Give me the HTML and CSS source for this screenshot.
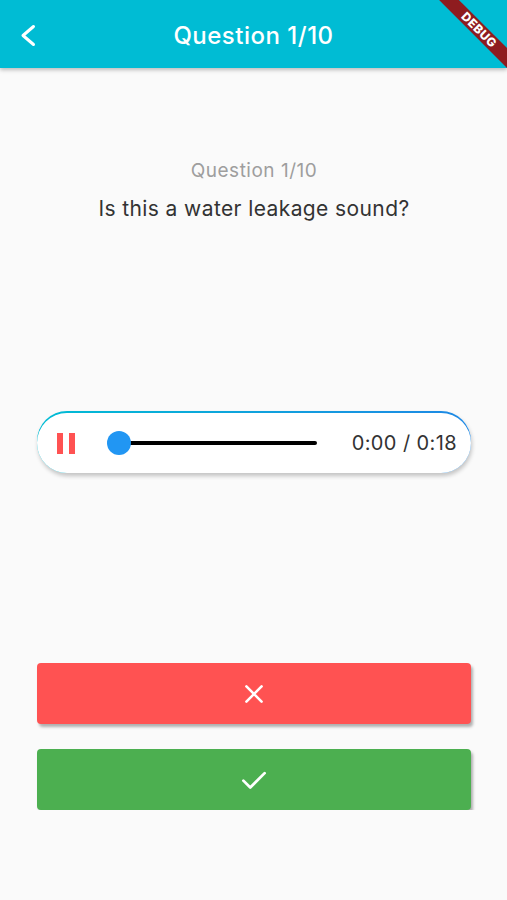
FILE: index.html
```html
<!DOCTYPE html>
<html lang="en">
<head>
    <meta charset="UTF-8">
    <meta name="viewport" content="width=device-width, initial-scale=1.0">
    <title>Question 1/10</title>
    <link rel="stylesheet" href="styles.css">
</head>
<body>

    <div class="app-bar">
        <button class="back-button">
            <svg width="24" height="24" viewBox="0 0 24 24">
                <path d="M17.5 3.5 L7 12.5 L17.5 21.5" fill="none" stroke="white" stroke-width="3" stroke-linecap="round" stroke-linejoin="round"/>
            </svg>
        </button>
        <h1>Question 1/10</h1>
    </div>
    <div class="debug-banner">DEBUG</div>

    <div class="quiz-container">
        <p class="counter">Question 1/10</p>
        <p class="question">Is this a water leakage sound?</p>

        <div class="player">
            <div class="player-inner">
                <div class="pause-icon"><span></span><span></span></div>
                <svg class="slider" width="210" height="24" viewBox="0 0 210 24">
                    <line x1="12" y1="12" x2="208" y2="12" stroke="#000" stroke-width="4" stroke-linecap="round"/>
                    <circle cx="12" cy="12" r="12" fill="#2196f3"/>
                </svg>
                <span class="time">0:00 / 0:18</span>
            </div>
        </div>

        <div class="answers">
            <button class="answer no">
                <svg width="26" height="26" viewBox="0 0 24 24">
                    <path d="M5 5 L19 19 M19 5 L5 19" stroke="white" stroke-width="2.4" stroke-linecap="round"/>
                </svg>
            </button>
            <button class="answer yes">
                <svg width="30" height="30" viewBox="0 0 24 24">
                    <path d="M3.5 12.5 L9 18 L20.5 6.5" fill="none" stroke="white" stroke-width="2.2" stroke-linecap="round" stroke-linejoin="round"/>
                </svg>
            </button>
        </div>
    </div>

</body>
</html>
```

FILE: styles.css
```css
body {
    margin: 0;
    font-family: 'Inter', 'Roboto', sans-serif;
    background-color: #fafafa;
    overflow: hidden;
    position: relative;
}
.app-bar {
    height: 68px;
    background-color: #00bcd4;
    display: flex;
    align-items: center;
    justify-content: center;
    position: relative;
    box-shadow: 0 2px 4px rgba(0, 0, 0, 0.25);
}
.app-bar h1 {
    margin: 0 0 -2px;
    color: white;
    font-size: 24px;
    font-weight: 500;
    letter-spacing: 0.5px;
}
.back-button {
    position: absolute;
    left: 16px;
    top: 23px;
    background: none;
    border: none;
    padding: 0;
    width: 24px;
    height: 24px;
}
.debug-banner {
    position: absolute;
    left: 419px;
    top: 23px;
    width: 120px;
    height: 14px;
    line-height: 14px;
    transform: rotate(45deg);
    background-color: #8e1c1f;
    color: white;
    font-size: 12px;
    font-weight: 800;
    text-align: center;
    letter-spacing: 0.5px;
}
.quiz-container {
    padding: 91px 36px 0 37px;
    text-align: center;
}
.counter {
    margin: 0;
    font-size: 19px;
    line-height: 24px;
    letter-spacing: 0.5px;
    color: #9e9e9e;
}
.question {
    margin: 12px 0 0;
    font-size: 21px;
    line-height: 28px;
    letter-spacing: 0.4px;
    color: #333;
}
.player {
    margin-top: 188px;
    padding-top: 2px;
    border-radius: 30px;
    background: linear-gradient(to right, #00bcd4, #1e88e5);
    box-shadow: 1px 3px 4px rgba(0, 0, 0, 0.22);
}
.player-inner {
    height: 60px;
    border-radius: 30px;
    background-color: white;
    display: flex;
    align-items: center;
    padding: 0 14px 0 20px;
}
.pause-icon {
    display: flex;
    gap: 6px;
    margin-top: 1px;
}
.pause-icon span {
    width: 6px;
    height: 21px;
    background-color: #ff5252;
}
.slider {
    margin-left: 32px;
}
.time {
    margin-left: auto;
    font-size: 20px;
    letter-spacing: 0.4px;
    color: #333;
}
.answers {
    margin-top: 190px;
    display: flex;
    flex-direction: column;
    gap: 25px;
}
.answer {
    height: 61px;
    border: none;
    border-radius: 4px;
    display: flex;
    align-items: center;
    justify-content: center;
    box-shadow: 2px 3px 3px rgba(0, 0, 0, 0.3);
}
.answer.no {
    background-color: #ff5252;
}
.answer.yes {
    background-color: #4caf50;
}
```
